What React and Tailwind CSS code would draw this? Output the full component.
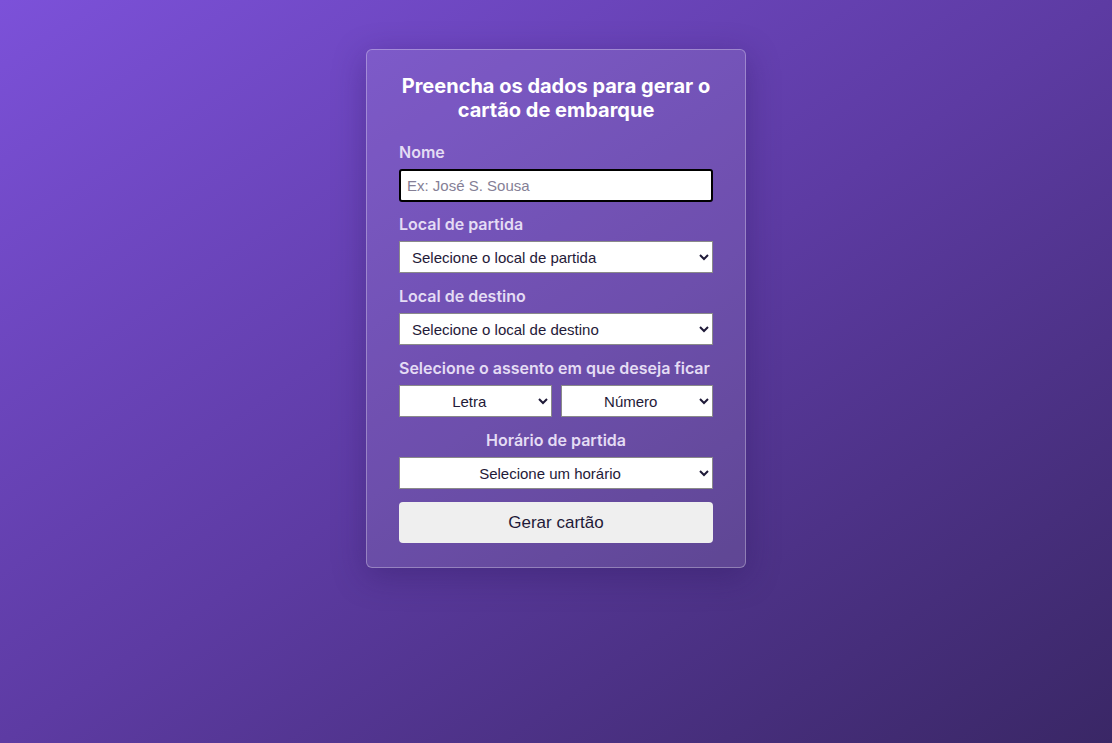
import React from "react";

const selCls =
  "w-full h-8 bg-white border border-[#8a8a8a] text-[#1f1a38] text-[15px] px-2 outline-none font-['Liberation_Sans',Arial,sans-serif]";
const lblCls = "text-[16px] leading-5 font-semibold text-[#e4dcf4]";

export default function App() {
  return (
    <div className="min-h-[743px] w-full flex justify-center items-start pt-[49px] bg-gradient-to-br from-[#7c51d9] via-[#5d3ba3] to-[#3a2766] font-['Liberation_Sans',Arial,sans-serif]">
      <div className="w-[380px] rounded-md border border-white/30 bg-white/10 shadow-[0_8px_32px_rgba(40,20,90,0.35)] px-8 pt-6 pb-6">
        <h1 className="text-center text-white text-[20px] leading-6 font-bold font-['Inter','Noto_Sans',sans-serif]">
          Preencha os dados para gerar o cartão de embarque
        </h1>

        <div className="mt-5 flex flex-col font-['Inter','Noto_Sans',sans-serif]">
          <label className={lblCls}>Nome</label>
          <input
            className="mt-[7px] h-[33px] w-full bg-white border-2 border-black rounded-[3px] px-[6px] text-[15px] text-[#1f1a38] placeholder:text-[#857f96] outline-none font-['Liberation_Sans',Arial,sans-serif]"
            placeholder="Ex: José S. Sousa"
          />

          <label className={"mt-3 " + lblCls}>Local de partida</label>
          <select className={"mt-[7px] " + selCls} defaultValue="">
            <option value="">Selecione o local de partida</option>
          </select>

          <label className={"mt-[13px] " + lblCls}>Local de destino</label>
          <select className={"mt-[7px] " + selCls} defaultValue="">
            <option value="">Selecione o local de destino</option>
          </select>

          <label className={"mt-[13px] " + lblCls}>Selecione o assento em que deseja ficar</label>
          <div className="mt-[7px] flex gap-[9px]">
            <select className={selCls + " text-center [text-align-last:center]"} defaultValue="">
              <option value="">Letra</option>
            </select>
            <select className={selCls + " text-center [text-align-last:center]"} defaultValue="">
              <option value="">Número</option>
            </select>
          </div>

          <label className={"mt-[13px] text-center " + lblCls}>Horário de partida</label>
          <select className={"mt-[7px] text-center [text-align-last:center] " + selCls} defaultValue="">
            <option value="">Selecione um horário</option>
          </select>

          <button className="mt-[13px] h-[41px] w-full rounded-[4px] bg-[#efefef] text-[17px] text-[#1f1a38] font-['Liberation_Sans',Arial,sans-serif]">
            Gerar cartão
          </button>
        </div>
      </div>
    </div>
  );
}
